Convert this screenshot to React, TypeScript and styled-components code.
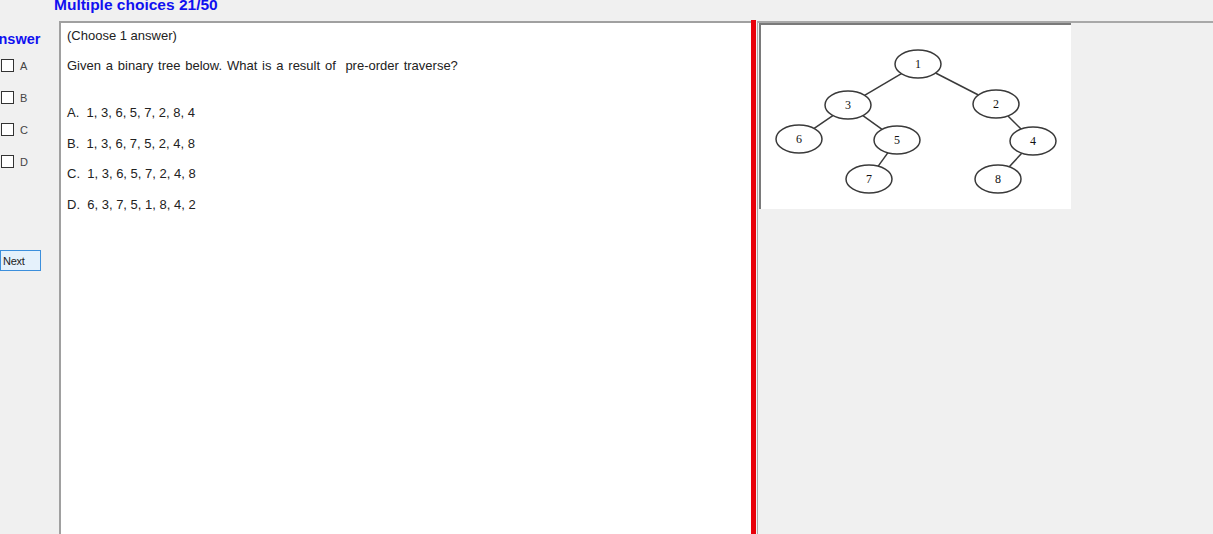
import React from "react";
import styled, { createGlobalStyle } from "styled-components";

const GlobalStyle = createGlobalStyle`
  html, body { margin: 0; padding: 0; }
  body {
    background: #f0f0f0;
    overflow: hidden;
    font-family: "Liberation Sans", Arial, sans-serif;
    color: #222;
  }
`;

const Page = styled.div`
  width: 1213px;
  height: 534px;
  display: flex;
  flex-direction: column;
  overflow: hidden;
`;

const TitleRow = styled.div`
  height: 21px;
  padding-left: 54px;
  flex: none;
  overflow: hidden;
`;

const Title = styled.div`
  margin-top: -4px;
  font-size: 15.5px;
  line-height: 18px;
  font-weight: bold;
  color: #1010f0;
`;

const Main = styled.div`
  flex: 1;
  display: flex;
  min-height: 0;
`;

const Sidebar = styled.div`
  width: 59px;
  flex: none;
  display: flex;
  flex-direction: column;
  overflow: hidden;
`;

const AnswerLabel = styled.div`
  margin-top: 10px;
  margin-left: -12px;
  font-size: 14.5px;
  line-height: 16px;
  font-weight: bold;
  color: #1010f0;
`;

const ChoiceList = styled.div`
  margin-top: 12px;
  display: flex;
  flex-direction: column;
  gap: 19px;
`;

const ChoiceRow = styled.label`
  display: flex;
  align-items: center;
  height: 13px;
  padding-left: 1px;
  gap: 6px;
  font-size: 11px;
  color: #444;
`;

const Box = styled.span`
  width: 11px;
  height: 11px;
  border: 1px solid #333;
  background: #fff;
  flex: none;
`;

const NextButton = styled.button`
  margin-top: 82px;
  width: 41px;
  height: 21px;
  padding: 0 0 0 2px;
  text-align: left;
  border: 1px solid #3c8fdc;
  background: #e5f1fb;
  font-family: "Liberation Sans", Arial, sans-serif;
  font-size: 11px;
  color: #222;
  letter-spacing: -0.3px;
`;

const QuestionPanel = styled.div`
  flex: none;
  background: #fff;
  border-top: 2px solid #a0a0a0;
  border-left: 2px solid #a0a0a0;
  padding: 5px 0 0 6px;
  box-sizing: border-box;
  width: 692px;
  display: flex;
  flex-direction: column;
`;

const Line = styled.div<{ $gap: number; $wide?: boolean }>`
  margin-top: ${(p) => p.$gap}px;
  font-size: 13px;
  line-height: 15px;
  color: #222;
  white-space: pre;
  word-spacing: ${(p) => (p.$wide ? "1.2px" : "0")};
`;

const RedBar = styled.div`
  width: 5px;
  flex: none;
  margin-top: -1px;
  background: #e8000a;
`;

const RightPanel = styled.div`
  flex: 1;
  border-top: 2px solid #a8a8a8;
  border-left: 1px solid #a8a8a8;
  margin-left: 1px;
  padding-left: 1px;
`;

const ImageFrame = styled.div`
  width: 310px;
  height: 184px;
  border-top: 2px solid #7a7a7a;
  border-left: 2px solid #7a7a7a;
  background: #fff;
`;

const nodes: { id: string; x: number; y: number }[] = [
  { id: "1", x: 157, y: 39 },
  { id: "3", x: 87, y: 80 },
  { id: "2", x: 235, y: 79 },
  { id: "6", x: 38, y: 114 },
  { id: "5", x: 136, y: 115 },
  { id: "4", x: 272, y: 116 },
  { id: "7", x: 108, y: 154 },
  { id: "8", x: 237, y: 154 },
];

const edges: [string, string][] = [
  ["1", "3"],
  ["1", "2"],
  ["3", "6"],
  ["3", "5"],
  ["5", "7"],
  ["2", "4"],
  ["4", "8"],
];

const RX = 23;
const RY = 14;

function edgePoint(ax: number, ay: number, bx: number, by: number) {
  const dx = bx - ax;
  const dy = by - ay;
  const t = 1 / Math.sqrt((dx * dx) / (RX * RX) + (dy * dy) / (RY * RY));
  return [ax + dx * t, ay + dy * t];
}

const Tree = () => {
  const byId = Object.fromEntries(nodes.map((n) => [n.id, n]));
  return (
    <svg width="308" height="182" viewBox="0 0 308 182">
      {edges.map(([a, b]) => {
        const A = byId[a];
        const B = byId[b];
        const [x1, y1] = edgePoint(A.x, A.y, B.x, B.y);
        const [x2, y2] = edgePoint(B.x, B.y, A.x, A.y);
        return (
          <line key={a + b} x1={x1} y1={y1} x2={x2} y2={y2} stroke="#3a3a3a" strokeWidth="1.5" />
        );
      })}
      {nodes.map((n) => (
        <g key={n.id}>
          <ellipse cx={n.x} cy={n.y} rx={RX} ry={RY} fill="#fff" stroke="#3a3a3a" strokeWidth="1.5" />
          <text
            x={n.x}
            y={n.y + 4}
            textAnchor="middle"
            fontFamily='"Liberation Serif", "Times New Roman", serif'
            fontSize="12"
            fill="#111"
          >
            {n.id}
          </text>
        </g>
      ))}
    </svg>
  );
};

export default function App() {
  return (
    <Page>
      <GlobalStyle />
      <TitleRow>
        <Title>Multiple choices 21/50</Title>
      </TitleRow>
      <Main>
        <Sidebar>
          <AnswerLabel>Answer</AnswerLabel>
          <ChoiceList>
            {["A", "B", "C", "D"].map((c) => (
              <ChoiceRow key={c}>
                <Box />
                {c}
              </ChoiceRow>
            ))}
          </ChoiceList>
          <NextButton>Next</NextButton>
        </Sidebar>
        <QuestionPanel>
          <Line $gap={0}>(Choose 1 answer)</Line>
          <Line $gap={15} $wide>Given a binary tree below. What is a result of  pre-order traverse?</Line>
          <Line $gap={32}>A.  1, 3, 6, 5, 7, 2, 8, 4</Line>
          <Line $gap={16}>B.  1, 3, 6, 7, 5, 2, 4, 8</Line>
          <Line $gap={15}>C.  1, 3, 6, 5, 7, 2, 4, 8</Line>
          <Line $gap={16}>D.  6, 3, 7, 5, 1, 8, 4, 2</Line>
        </QuestionPanel>
        <RedBar />
        <RightPanel>
          <ImageFrame>
            <Tree />
          </ImageFrame>
        </RightPanel>
      </Main>
    </Page>
  );
}
